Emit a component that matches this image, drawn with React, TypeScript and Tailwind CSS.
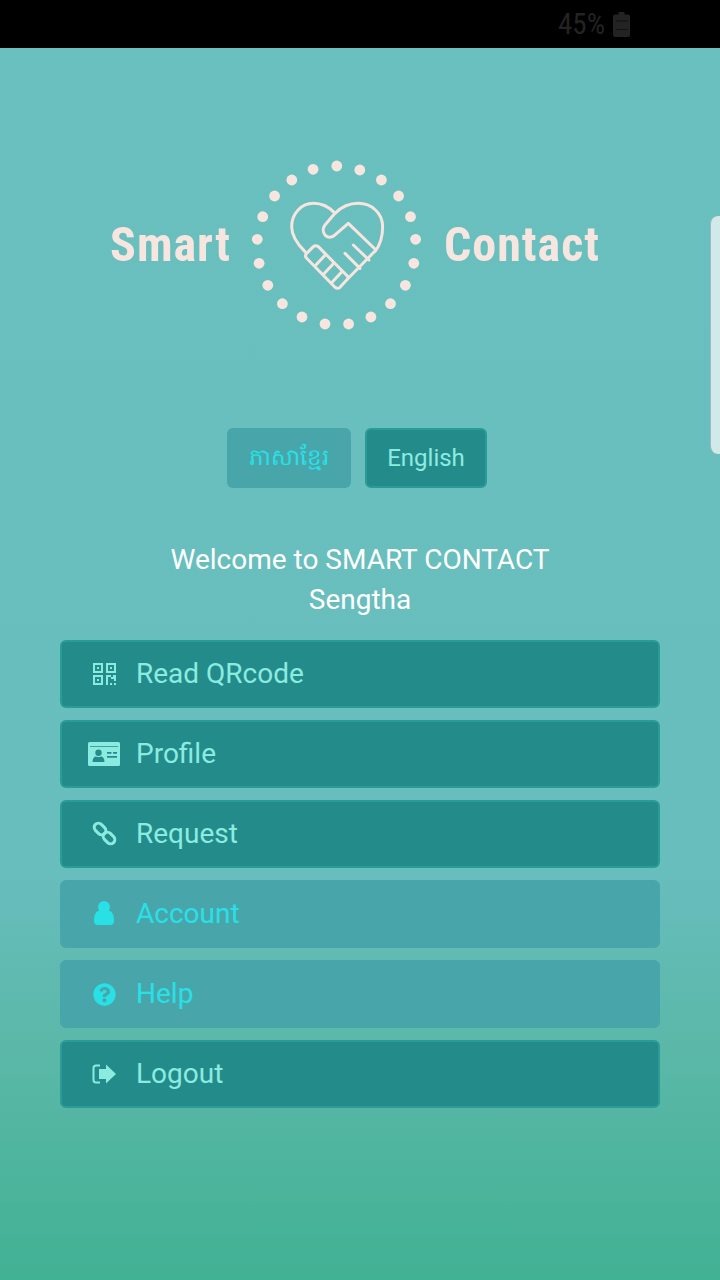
import { FaQuestionCircle } from "react-icons/fa";

const dots = [
  [336.8, 166], [359.8, 170], [381.4, 180], [398.6, 196], [410.5, 216.7], [415.6, 239.3], [413.8, 263.3],
  [405.4, 285.3], [390.5, 303.7], [370.9, 317], [348.6, 324], [325, 324], [302, 317], [282.4, 303.7],
  [267.8, 285.3], [259.1, 263.3], [257.3, 239.3], [262.7, 216.7], [274.6, 196], [291.8, 180], [313.1, 169.3],
];

function HeartLogo() {
  return (
    <svg width="180" height="180" viewBox="245 155 180 180" className="shrink-0 blur-[0.4px]">
      {dots.map(([x, y], i) => (
        <circle key={i} cx={x} cy={y} r="5.4" fill="#f6e6df" />
      ))}
      <g
        transform="translate(270 190) scale(0.3333)"
        fill="none"
        stroke="#f6e6df"
        strokeWidth="9"
        strokeLinecap="round"
        strokeLinejoin="round"
      >
        {/* heart outline */}
        <path d="M195 70C175 48 150 40 130 40C95 40 65 70 65 110C65 135 80 160 105 185" />
        <path d="M315 185C330 165 338 135 338 110C338 70 305 40 265 40C240 40 215 50 195 70L165 105C150 125 170 155 195 135L235 100L318 180L235 265" />
        {/* fingers */}
        <path d="M110 190L130 170Q136 165 145 170L232 258Q236 263 232 268L210 292Q203 298 195 292L110 205Q103 198 110 190Z" />
        <path d="M137 226L165 196M162 251L190 221M187 276L215 246" />
        {/* thumb lines */}
        <path d="M225 190L270 235M250 165L297 210" />
      </g>
    </svg>
  );
}

function QrIcon() {
  return (
    <svg width="23" height="22" viewBox="0 0 23 22" fill="currentColor">
      <path fillRule="evenodd" d="M0 0h10v10H0zM2 2v6h6V2zM13 0h10v10H13zM15 2v6h6V2zM0 12h10v10H0zM2 14v6h6v-6z" />
      <rect x="4" y="4" width="2" height="2" />
      <rect x="17" y="4" width="2" height="2" />
      <rect x="4" y="16" width="2" height="2" />
      <path d="M13 12h5v2h2v-2h3v6h-2v-2h-3v-2h-3v8h-2zM17 20h2v2h-2zM21 20h2v2h-2z" />
    </svg>
  );
}

function CardIcon() {
  return (
    <svg width="32" height="24" viewBox="0 0 32 24" fill="currentColor">
      <path
        fillRule="evenodd"
        d="M1.500 0h29A1.500 1.500 0 0 1 32 1.500v21a1.500 1.500 0 0 1-1.500 1.500h-29A1.500 1.500 0 0 1 0 22.500v-21A1.500 1.500 0 0 1 1.500 0zM2 4v.8h28V4zM10.500 7.500a3.200 3.200 0 1 0 0 6.400 3.200 3.200 0 0 0 0-6.400zM4.500 20h12c0-3.500-1.500-5.500-3.500-5.500-1.500.8-3.500.8-5 0-2 0-3.500 2-3.500 5.500zM19 10v1.800h4.500V10zM25 10v1.800h4V10zM19 14v1.800h10V14z"
      />
    </svg>
  );
}

function LinkIcon() {
  return (
    <svg width="25" height="25" viewBox="0 0 25 25" fill="none" stroke="currentColor" strokeWidth="3" className="-translate-y-[1px]">
      <rect x="1.500" y="3.800" width="13" height="8.400" rx="4.200" transform="rotate(45 8 8)" />
      <rect x="10.500" y="12.800" width="13" height="8.400" rx="4.200" transform="rotate(45 17 17)" />
    </svg>
  );
}

function UserIcon() {
  return (
    <svg width="20" height="24" viewBox="0 0 20 24" fill="currentColor" className="-translate-y-[1px]">
      <circle cx="10" cy="6" r="6" />
      <path d="M0 20C0 14 2 9.500 6 9.500Q10 13 14 9.500C18 9.500 20 14 20 20Q20 24 16 24H4Q0 24 0 20Z" />
    </svg>
  );
}

function LogoutIcon() {
  return (
    <svg width="24" height="20" viewBox="0 0 24 20">
      <path d="M8 1.500H4Q1.500 1.500 1.500 4V16Q1.500 18.500 4 18.500H8" fill="none" stroke="currentColor" strokeWidth="2" />
      <path d="M7 5H14V.5L24 10L14 19.500V15H7Z" fill="currentColor" />
    </svg>
  );
}

const items = [
  { label: "Read QRcode", icon: <QrIcon />, on: true },
  { label: "Profile", icon: <CardIcon />, on: true },
  { label: "Request", icon: <LinkIcon />, on: true },
  { label: "Account", icon: <UserIcon />, on: false },
  { label: "Help", icon: <FaQuestionCircle className="text-[23px]" />, on: false },
  { label: "Logout", icon: <LogoutIcon />, on: true },
];

export default function App() {
  return (
    <div className="relative flex h-[1280px] w-[720px] flex-col overflow-hidden bg-[linear-gradient(180deg,#6abfbf_0%,#68bdbd_68%,#5bb8a8_82%,#41b193_100%)] font-['Roboto',sans-serif]">
      {/* status bar */}
      <div className="flex h-12 shrink-0 items-center justify-end gap-[8px] bg-black pr-[90px] text-[#232323]">
        <span className="text-[29px] leading-none font-['Roboto_Condensed','Roboto',sans-serif]">45%</span>
        <svg width="17" height="25" viewBox="0 0 17 25" fill="currentColor">
          <path d="M5.500 0h6v2.500h3.500a2 2 0 0 1 2 2V23a2 2 0 0 1-2 2H2a2 2 0 0 1-2-2V4.500a2 2 0 0 1 2-2h3.500z" />
          <path d="M2.500 8.500h12v1h-12zM2.500 17h12v1h-12z" fill="#111111" />
        </svg>
      </div>

      {/* edge panel handle */}
      <div className="absolute right-0 top-[216px] h-[238px] w-[10px] rounded-l-[8px] border-l border-[#9dbcbc] bg-[#d2e9e9]" />

      {/* logo */}
      <div className="ml-[110px] mt-[107px] flex h-[180px] items-center text-[48px] font-bold leading-none tracking-[1px] text-[#f6e6df] font-['Roboto_Condensed','Roboto',sans-serif]">
        <span className="mr-[15px] w-[120px] blur-[0.4px]">Smart</span>
        <HeartLogo />
        <span className="ml-[19px] w-[156px] blur-[0.4px]">Contact</span>
      </div>

      {/* language buttons */}
      <div className="mt-[93px] flex justify-center gap-[14px] pr-[6px] text-[24px]">
        <button className="flex h-[60px] w-[124px] items-center justify-center rounded-md bg-[#48a6ab] text-[23px] text-[#29e0e6]">ភាសាខ្មែរ</button>
        <button className="flex h-[60px] w-[122px] items-center justify-center rounded-md border-2 border-[#2a9b98] bg-[#248b8b] text-[#8cebe0]">English</button>
      </div>

      {/* welcome */}
      <div className="mt-[52px] text-center text-[28px] leading-[40px] text-white">
        <p>Welcome to SMART CONTACT</p>
        <p>Sengtha</p>
      </div>

      {/* menu */}
      <div className="mx-[60px] mt-[20px] flex flex-col gap-3">
        {items.map(({ label, icon, on }) => (
          <button
            key={label}
            className={
              on
                ? "flex h-[68px] items-center rounded-md border-2 border-[#2a9b98] bg-[#248b8b] pl-[22px] text-[28px] text-[#8cebe0]"
                : "flex h-[68px] items-center rounded-md bg-[#48a6ab] pl-[24px] text-[28px] text-[#29e0e6]"
            }
          >
            <span className="flex w-[40px] justify-center">{icon}</span>
            <span className="ml-[12px]">{label}</span>
          </button>
        ))}
      </div>
    </div>
  );
}
